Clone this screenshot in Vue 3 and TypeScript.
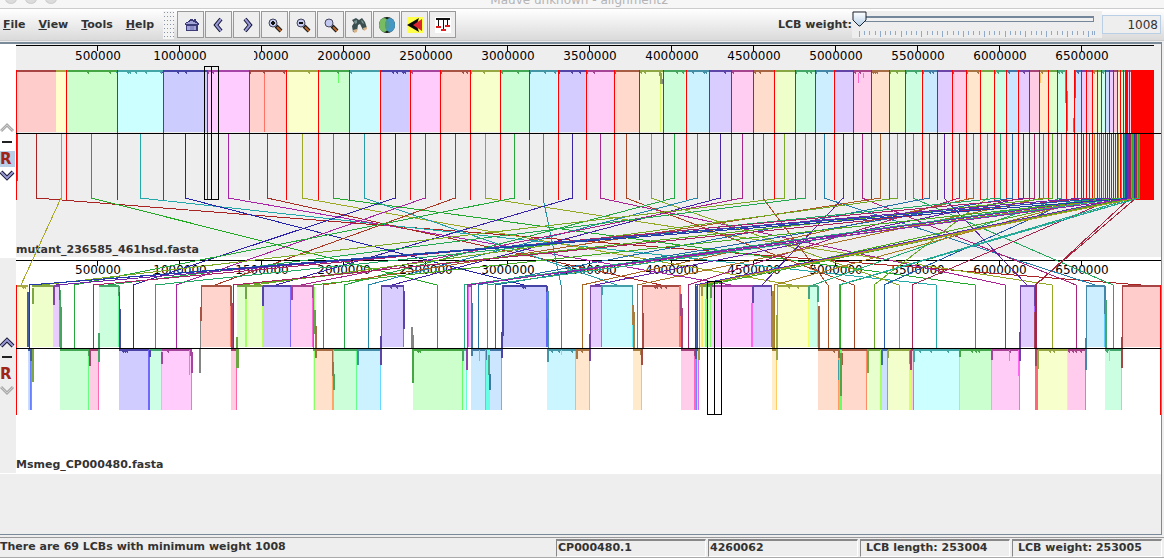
<script setup lang="ts">
import { ref } from 'vue'

type Strand = 'up' | 'down'
interface Lcb { id: number; hue: number; a: number; aEnd: number; b: number; bEnd: number; strand: Strand }
interface Bar { x: number; y: number; w: number; h: number; fill: string }

const weight = ref('1008')
const level = ref(0)

const menus = ['File', 'View', 'Tools', 'Help']
const tools = ['Home', 'Left', 'Right', 'Zoom in', 'Zoom out', 'Zoom reset', 'Find feature', 'Color scheme', 'Reference', 'Show LCB tree']
const rulerSteps = Array.from({ length: 13 }, (_, i) => ({ x: 97 + 82 * i, text: String((i + 1) * 500000) }))
const sliderTicks = [
  ...Array.from({ length: 45 }, (_, i) => ({ x: 7 + Math.round((i * 26) / 5), major: i % 4 === 0 })),
  { x: 240, major: false },
  { x: 242, major: false },
]

/* Start of every block in the first genome, in order. */
const startsA = [
  16, 56, 66, 117, 163, 207, 249, 286, 318, 349, 380, 410, 440, 470, 500, 529, 558, 586, 614, 639, 663, 686, 709, 731,
  753, 774, 795, 815, 834, 853, 871, 889, 905, 922, 937, 952, 966, 980, 994, 1006, 1018, 1029, 1039, 1048, 1057, 1074,
  1081, 1086, 1092, 1097, 1101, 1105, 1109, 1113, 1117, 1120, 1123, 1125, 1127, 1129, 1131, 1132, 1133, 1134, 1135,
  1136, 1137, 1138, 1139, 1140,
]
/* Span in the second genome; a negative start marks the reverse strand. */
const spansB: Record<number, [number, number]> = {
  1: [16, 28], 51: [-28, 32], 63: [-29, 31], 25: [32, 54], 46: [54, 60], 14: [-60, 89], 41: [-89, 99], 26: [99, 119],
  10: [-119, 149], 38: [-149, 162], 11: [-162, 192], 12: [201, 231], 47: [-231, 237], 43: [237, 246], 31: [246, 263],
  16: [263, 291], 23: [291, 313], 55: [-313, 315], 30: [-315, 333], 20: [-333, 357], 21: [-357, 381], 22: [381, 404],
  2: [-413, 463], 50: [-463, 467], 52: [467, 472], 64: [467, 469], 33: [-471, 486], 56: [-486, 490], 54: [-487, 489],
  39: [-490, 502], 4: [502, 547], 15: [-547, 576], 36: [-576, 590], 40: [590, 602], 9: [602, 633], 42: [-633, 642],
  6: [642, 681], 35: [-681, 696], 57: [-695, 697], 58: [-697, 699], 60: [699, 703], 66: [700, 702], 49: [703, 707],
  61: [707, 711], 5: [711, 753], 28: [753, 772], 48: [-772, 777], 7: [777, 809], 44: [809, 818], 24: [-818, 839],
  62: [-839, 840], 68: [-839, 841], 67: [-840, 842], 18: [-842, 867], 37: [-867, 882], 45: [-882, 888], 19: [-888, 911],
  53: [-911, 914], 3: [-914, 960], 8: [-960, 992], 17: [-992, 1020], 34: [1020, 1035], 59: [-1035, 1038],
  65: [-1035, 1037], 13: [-1038, 1068], 29: [-1068, 1086], 27: [1086, 1105], 32: [-1105, 1122], 0: [1122, 1161],
}
const lcbs: Lcb[] = startsA.slice(0, -1).map((a, id) => {
  const [s, e] = spansB[id]
  return {
    id, a, b: Math.abs(s), bEnd: e,
    aEnd: id === 44 ? 1066 : startsA[id + 1],
    hue: (id % 6) * 60 + Math.floor(id / 6) * 5,
    strand: s < 0 ? 'down' : 'up',
  }
})

const pale = (h: number) => `hsl(${h}, 100%, 90%)`
const vivid = (h: number) => `hsl(${h}, 100%, 70%)`
const line = (h: number) => `hsl(${h}, 66%, 40%)`
const shade = (h: number) => (h < 0 ? '#858585' : `hsl(${h}, 42%, 46%)`)
const midA = (l: Lcb) => Math.floor((l.a + l.aEnd) / 2)
const midB = (l: Lcb) => Math.floor((l.b + l.bEnd - 1) / 2)

const redLines = [...startsA.filter((_, i) => i !== 1), 1066]

const blockBars: Bar[] = lcbs.flatMap((l) => {
  const up = l.strand === 'up'
  const w = l.bEnd - l.b
  return [
    { x: l.a, y: 71, w: l.aEnd - l.a, h: 61, fill: pale(l.hue) },
    { x: l.a, y: 70, w: l.aEnd - l.a, h: 2, fill: shade(l.hue) },
    { x: l.b, y: up ? 286 : 350, w, h: up ? 61 : 60, fill: pale(l.hue) },
    { x: l.bEnd - 1, y: up ? 286 : 350, w: 1, h: up ? 61 : 60, fill: vivid(l.hue) },
    { x: l.b, y: up ? 285 : 349, w, h: 2, fill: shade(l.hue) },
  ]
})

const vividBars: Bar[] = ([
  [264, 72, 1, 60, 5], [338, 73, 1, 10, 120], [660, 84, 1, 48, 75], [858, 73, 1, 10, 320], [863, 73, 1, 5, 320],
  [1040, 73, 1, 10, 35], [148, 350, 2, 60, 245], [189, 350, 1, 25, 305], [245, 299, 2, 48, 95], [313, 287, 2, 42, 105],
  [332, 350, 2, 60, 25], [485, 350, 1, 49, 205], [486, 350, 4, 60, 170], [479, 350, 1, 11, 205], [561, 350, 1, 5, 190],
  [546, 318, 2, 29, 240], [679, 286, 2, 61, 5], [694, 350, 2, 60, 325], [705, 299, 2, 48, 110], [710, 298, 1, 49, 110],
  [751, 303, 2, 44, 305], [839, 350, 3, 60, 120], [880, 350, 2, 60, 95], [887, 350, 1, 57, 215], [909, 350, 2, 60, 75],
  [1009, 350, 1, 11, 305], [1018, 350, 1, 26, 305], [1035, 350, 3, 60, 352], [1109, 350, 1, 11, 145],
] as number[][]).map(([x, y, w, h, hue]) => ({ x, y, w, h, fill: vivid(hue) }))

const drops: Bar[] = ([
  [659, 71, 2, 5, 75], [660, 73, 2, 11, 75], [662, 79, 1, 5, -1], [1065, 72, 1, 31, 155], [1067, 91, 1, 40, -1],
  [1073, 118, 1, 14, -1], [1075, 72, 1, 26, 215],
  [27, 292, 2, 55, 225], [30, 349, 2, 12, 225], [32, 288, 2, 16, 85], [32, 348, 2, 34, 85], [53, 286, 2, 19, 275],
  [59, 286, 1, 14, 275], [60, 290, 1, 58, 135], [61, 307, 1, 41, 135], [88, 349, 1, 7, 130], [89, 350, 2, 16, 330],
  [98, 333, 2, 29, 140], [118, 286, 2, 10, 140], [119, 292, 1, 56, 245], [120, 309, 1, 39, 245], [149, 350, 2, 7, 245],
  [161, 352, 2, 12, 305], [190, 350, 2, 6, 305], [191, 352, 2, 21, 305], [200, 321, 1, 28, -1], [199, 348, 2, 25, -1],
  [200, 307, 2, 14, 10], [201, 286, 1, 30, 10], [230, 286, 2, 20, 10], [231, 303, 2, 45, 335], [236, 337, 2, 12, 95],
  [236, 348, 3, 20, 95], [245, 286, 2, 13, 95], [262, 286, 2, 20, 250], [291, 286, 2, 14, 315], [312, 286, 1, 12, 315],
  [314, 310, 2, 24, 105], [315, 326, 2, 32, 25], [332, 350, 1, 16, 25], [332, 362, 2, 14, 25], [333, 374, 2, 16, 135],
  [357, 350, 2, 15, 195], [380, 336, 2, 29, 255], [381, 286, 1, 50, 255], [403, 286, 1, 14, 255], [403, 291, 2, 38, 255],
  [411, 327, 2, 22, -1], [412, 335, 2, 35, -1], [412, 349, 2, 34, 120], [462, 350, 2, 11, 135], [466, 348, 2, 22, 285],
  [467, 286, 1, 62, 285], [471, 286, 1, 18, 285], [471, 303, 2, 45, 205], [471, 350, 2, 6, 205], [486, 350, 1, 10, 205],
  [488, 355, 2, 20, 165], [489, 374, 2, 16, 210], [501, 332, 2, 26, 245], [502, 286, 2, 50, 245], [546, 286, 2, 6, 240],
  [547, 291, 2, 27, 190], [548, 302, 1, 60, 190], [547, 349, 2, 13, 190], [576, 350, 2, 9, 30], [589, 334, 2, 27, 270],
  [590, 286, 1, 48, 270], [601, 286, 2, 9, 185], [632, 286, 1, 20, 185], [632, 305, 2, 20, 35], [633, 312, 2, 36, 35],
  [640, 350, 2, 5, 35], [641, 349, 2, 16, 5], [642, 286, 1, 62, 5], [642, 313, 2, 35, 5], [680, 294, 2, 22, 325],
  [681, 308, 2, 40, 325], [694, 350, 2, 6, 325], [695, 334, 2, 25, 225], [696, 286, 1, 62, 225], [698, 349, 2, 11, 50],
  [699, 286, 1, 62, 50], [701, 287, 2, 9, 50], [706, 286, 2, 13, 100], [710, 286, 2, 12, 110], [752, 286, 2, 17, 260],
  [771, 286, 1, 10, 260], [772, 291, 2, 57, 40], [776, 315, 2, 45, 65], [777, 286, 1, 62, 65], [808, 286, 2, 13, 155],
  [817, 286, 2, 16, 155], [818, 306, 2, 42, 20], [838, 350, 2, 8, 20], [838, 360, 1, 20, 185], [840, 353, 2, 43, 115],
  [842, 353, 1, 12, 15], [867, 350, 2, 23, 90], [881, 350, 2, 15, 215], [888, 350, 1, 8, 75], [909, 350, 1, 14, 75],
  [910, 350, 2, 20, 340], [913, 350, 2, 12, 180], [959, 350, 2, 7, 120], [991, 350, 2, 10, 305], [1019, 332, 2, 29, 265],
  [1020, 286, 1, 46, 265], [1034, 286, 1, 20, 265], [1035, 298, 1, 16, 265], [1034, 312, 2, 36, 345],
  [1035, 349, 2, 17, 345], [1037, 350, 2, 19, 70], [1085, 338, 2, 32, 200], [1086, 286, 1, 52, 200],
  [1104, 286, 2, 28, 200], [1105, 300, 2, 50, 145], [1121, 337, 2, 31, 0], [1122, 286, 1, 51, 0],
] as number[][]).map(([x, y, w, h, hue]) => ({ x, y, w, h, fill: shade(hue) }))

/* Small dips just beneath the similarity cap. */
const dipsA = [
  88, 110, 117, 128, 130, 136, 146, 161, 163, 178, 186, 208, 213, 250, 264, 284, 309, 338, 351, 393, 397, 403, 405, 412,
  441, 463, 467, 471, 484, 502, 518, 530, 545, 555, 559, 572, 580, 587, 594, 615, 641, 645, 677, 683, 693, 704, 706,
  725, 733, 755, 760, 796, 807, 811, 816, 827, 855, 860, 873, 875, 877, 890, 897, 906, 916, 923, 930, 933, 953, 967,
  978, 995, 998, 1009, 1024, 1042, 1059, 1062, 1078, 1094, 1103,
]
const dipsUp = [23, 25, 391, 397, 523, 525, 655, 657, 661, 666, 789, 798]
const dipsDown = [
  123, 125, 127, 168, 418, 420, 552, 559, 572, 582, 834, 920, 931, 948, 972, 976, 979, 1010, 1050, 1054, 1069, 1073,
  1076, 1081, 1107,
]
const dip = (x: number, y: number, l?: Lcb): Bar => ({ x: x - 1, y, w: 2, h: 1, fill: shade(l ? l.hue : 0) })
const dipPair = (x: number, y: number, l?: Lcb): Bar[] => [dip(x, y, l), { ...dip(x, y + 1, l), x, w: 1 }]
const dips: Bar[] = [
  ...dipsA.flatMap((x) => dipPair(x, 72, lcbs.find((l) => x >= l.a && x < l.aEnd))),
  ...dipsUp.flatMap((x) => dipPair(x, 287, lcbs.find((l) => l.strand === 'up' && x >= l.b && x < l.bEnd))),
  ...dipsDown.flatMap((x) => dipPair(x, 351, lcbs.find((l) => l.strand === 'down' && x >= l.b && x < l.bEnd))),
]

const bars: Bar[] = [...blockBars, ...vividBars, ...drops, ...dips]

const stems: Bar[] = lcbs.flatMap((l) => {
  const out = [{ x: midA(l), y: 134, w: 1, h: l.id === 1 ? 66 : 65, fill: line(l.hue) }]
  if (l.strand === 'down') out.push({ x: midB(l), y: 285, w: 1, h: 63, fill: line(l.hue) })
  return out
})
</script>

<template>
  <div class="window">
    <header class="titlebar">
      <i class="dot"></i><i class="dot"></i><i class="dot"></i>
      <span class="title">Mauve unknown - alignment2</span>
    </header>

    <div class="toolbar">
      <nav class="menus">
        <button v-for="m in menus" :key="m" class="menu"><u>{{ m[0] }}</u>{{ m.slice(1) }}</button>
      </nav>
      <div class="grip"></div>
      <div class="tools">
        <button v-for="(t, i) in tools" :key="t" class="tool" :aria-label="t">
          <svg viewBox="0 0 20 20" width="20" height="20">
            <g v-if="i === 0" shape-rendering="crispEdges">
              <path d="M4 8h1v-1h2v-1h1v-1h1v-1h3v1h1v-1h2v2h1v1h1v1h1v2h-1v6h-12v-6h-1v-2z" fill="#3c3c78" />
              <path d="M5 8h2v-1h2v-1h3v1h2v1h2v1h-11zM6 11h9v4h-9z" fill="#a3a3d8" />
              <path d="M9 11h4v4h-4z" fill="#8c8cc4" />
            </g>
            <g v-else-if="i === 1 || i === 2" fill="none">
              <path :d="i === 1 ? 'M12 4L7 10L12 16' : 'M8 4L13 10L8 16'" stroke="#101030" stroke-width="4" />
              <path :d="i === 1 ? 'M12 4L7 10L12 16' : 'M8 4L13 10L8 16'" stroke="#9999d6" stroke-width="2" />
            </g>
            <g v-else-if="i < 6">
              <path d="M11 11L16 16" stroke="#1a1a1a" stroke-width="4" />
              <path d="M12 12L16 16" stroke="#b8662a" stroke-width="2" />
              <circle cx="8" cy="8" r="4" fill="#c3c8ee" stroke="#44445c" />
              <path v-if="i < 5" d="M6 8h4" stroke="#111" stroke-width="2" />
              <path v-if="i === 3" d="M8 6v4" stroke="#111" stroke-width="2" />
            </g>
            <g v-else-if="i === 6">
              <path d="M3 5L7 3L10 5L13 3L16 7L18 13L14 15L11 9L9 10L8 16L4 17L3 11L5 8Z" fill="#3b4f50" />
              <path d="M5 6L8 5L8 8L6 9ZM12 5L14 6L15 9L13 8Z" fill="#7b9294" />
              <path d="M4 15L8 14L8 17L5 18ZM14 13L18 12L18 14L15 16Z" fill="#d8b48c" />
            </g>
            <g v-else-if="i === 7">
              <circle cx="10" cy="10" r="8" fill="#0c1a0c" />
              <ellipse cx="7" cy="10" rx="5" ry="7" fill="#78bb62" />
              <ellipse cx="13" cy="10" rx="5" ry="7" fill="#4797c4" />
              <path d="M10 4Q12 7 12 10Q12 13 10 16Q8 13 8 10Q8 7 10 4Z" fill="#4c9b91" />
            </g>
            <g v-else-if="i === 8">
              <rect x="2" y="2" width="16" height="16" fill="#ffff4a" />
              <path d="M2 10L14 3L12 9L12 11L14 17Z" fill="#0a0a0a" />
              <path d="M8 10L17 4V16Z" fill="#dc2430" />
            </g>
            <g v-else shape-rendering="crispEdges">
              <rect x="2" y="2" width="16" height="16" fill="#fff" />
              <path d="M3 3h14v2h-2v6h-1v-6h-3v9h-1v-9h-4v7h-1v-7h-2z" fill="#111" />
              <path d="M3 11h5v2h-5zM8 14h5v2h-5zM12 10h5v2h-5z" fill="#dd2020" />
            </g>
          </svg>
        </button>
      </div>
      <label class="weight-label" for="weight-slider">LCB weight:</label>
      <div class="slider">
        <svg viewBox="0 0 250 27" width="250" height="27" aria-hidden="true">
          <defs>
            <linearGradient id="knob" x1="0" y1="0" x2="0" y2="1">
              <stop offset="0" stop-color="#ffffff" />
              <stop offset="1" stop-color="#b4cfe8" />
            </linearGradient>
          </defs>
          <g shape-rendering="crispEdges">
            <rect x="7" y="5" width="235" height="6" fill="#74879a" />
            <rect x="7" y="7" width="234" height="3" fill="#f0f0f0" />
            <rect v-for="t in sliderTicks" :key="t.x" :x="t.x" y="20" width="1" :height="t.major ? 6 : 4" fill="#8fabc9" />
          </g>
          <path d="M1 1H14V9L8 15L7 15L1 9Z" fill="url(#knob)" stroke="#1c2430" />
        </svg>
        <input id="weight-slider" v-model="level" type="range" min="0" max="100" />
      </div>
      <input v-model="weight" class="weight-value" type="text" aria-label="Minimum LCB weight" />
    </div>

    <main class="viewer">
      <aside class="side">
        <section class="controls first">
          <button class="mini" aria-label="Move first genome up" disabled>
            <svg viewBox="0 0 16 12" width="16" height="12"><path d="M1 9L7 3L13 9" fill="none" stroke="#aaa" stroke-width="3" /><path d="M1 9L7 3L13 9" fill="none" stroke="#ccc" /></svg>
          </button>
          <button class="mini dash" aria-label="Hide first genome"><i></i></button>
          <button class="mini letter on" aria-label="Reference genome">R</button>
          <button class="mini" aria-label="Move first genome down">
            <svg viewBox="0 0 16 12" width="16" height="12"><path d="M1 3L7 9L13 3" fill="none" stroke="#151530" stroke-width="4" /><path d="M1 3L7 9L13 3" fill="none" stroke="#9999d6" stroke-width="2" /></svg>
          </button>
        </section>
        <section class="controls second">
          <button class="mini" aria-label="Move second genome up">
            <svg viewBox="0 0 16 12" width="16" height="12"><path d="M1 9L7 3L13 9" fill="none" stroke="#151530" stroke-width="4" /><path d="M1 9L7 3L13 9" fill="none" stroke="#9999d6" stroke-width="2" /></svg>
          </button>
          <button class="mini dash" aria-label="Hide second genome"><i></i></button>
          <button class="mini letter" aria-label="Set as reference genome">R</button>
          <button class="mini" aria-label="Move second genome down" disabled>
            <svg viewBox="0 0 16 12" width="16" height="12"><path d="M1 3L7 9L13 3" fill="none" stroke="#aaa" stroke-width="3" /><path d="M1 3L7 9L13 3" fill="none" stroke="#ccc" /></svg>
          </button>
        </section>
      </aside>

      <svg class="genomes" viewBox="16 44 1145 430" shape-rendering="crispEdges">
        <defs>
          <clipPath id="ruler-clip"><path d="M16 44H233V64H16ZM254 44H1161V64H254Z" /></clipPath>
        </defs>
        <rect x="16" y="44" width="1145" height="213" fill="#eeeeee" />
        <rect x="16" y="257" width="1145" height="217" fill="#ffffff" />

        <g class="ruler" clip-path="url(#ruler-clip)">
          <rect x="16" y="45" width="1138" height="1" />
          <g v-for="s in rulerSteps" :key="s.text">
            <rect :x="s.x" y="46" width="1" height="5" />
            <text :x="s.x + 1" y="60">{{ s.text }}</text>
          </g>
        </g>
        <rect x="233" y="45" width="21" height="1" />
        <g class="ruler">
          <rect x="16" y="260" width="1145" height="1" />
          <g v-for="s in rulerSteps" :key="s.text">
            <rect :x="s.x" y="261" width="1" height="5" />
            <text :x="s.x + 1" y="274">{{ s.text }}</text>
          </g>
        </g>

        <rect v-for="(b, i) in bars" :key="i" :x="b.x" :y="b.y" :width="b.w" :height="b.h" :fill="b.fill" />

        <g fill="#ff0000">
          <rect v-for="x in redLines" :key="x" :x="x" y="70" width="1" height="130" />
          <rect x="1126" y="70" width="1" height="130" />
          <rect x="1131" y="70" width="23" height="130" />
          <rect x="16" y="285" width="1" height="130" />
          <rect x="1160" y="285" width="1" height="130" />
        </g>
        <rect x="17" y="134" width="1" height="47" fill="#c04040" />

        <rect v-for="(s, i) in stems" :key="'s' + i" :x="s.x" :y="s.y" :width="s.w" :height="s.h" :fill="s.fill" />
        <rect x="16" y="133" width="1145" height="1" />
        <rect x="16" y="348" width="1145" height="1" />

        <text class="name" x="16" y="253">mutant_236585_461hsd.fasta</text>
        <text class="name" x="16" y="468">Msmeg_CP000480.fasta</text>

        <path v-for="l in lcbs" :key="'l' + l.id" :d="`M${midA(l)} 198L${midB(l)} 285`" :stroke="line(l.hue)" fill="none" />

        <g fill="none" stroke="#000">
          <path d="M204 66H218V199H204ZM211 66V199M707 281H721V414H707ZM714 281V414" />
        </g>
      </svg>
    </main>

    <div class="filler"></div>

    <footer class="status">
      <span class="message">There are 69 LCBs with minimum weight 1008</span>
      <span class="field">CP000480.1</span>
      <span class="field">4260062</span>
      <span class="field inset">LCB length: 253004</span>
      <span class="field inset">LCB weight: 253005</span>
    </footer>
  </div>
</template>

<style>
html,
body {
  margin: 0;
  background: #eeeeee;
}
</style>

<style scoped>
.window {
  display: flex;
  flex-direction: column;
  min-height: 100vh;
  box-sizing: border-box;
  background: #eeeeee;
  color: #333333;
  font: bold 11px/16px "DejaVu Sans", sans-serif;
}
button,
input {
  font: inherit;
  color: inherit;
  margin: 0;
  padding: 0;
  border: 0;
  background: none;
}
.titlebar {
  display: flex;
  align-items: flex-end;
  gap: 8px;
  height: 8px;
  padding-left: 5px;
  overflow: hidden;
  background: #f6f6f6;
  border-bottom: 1px solid #cccccc;
}
.dot {
  flex: none;
  width: 12px;
  height: 12px;
  margin-bottom: 4px;
  border-radius: 50%;
  background: #dcdcdc;
  box-shadow: inset 0 0 0 1px #d0d0d0;
}
.title {
  flex: 1;
  padding-right: 70px;
  text-align: center;
  font-weight: normal;
  font-size: 12px;
  color: #b4b4b4;
}
.toolbar {
  display: flex;
  align-items: center;
  height: 31px;
  padding-right: 3px;
  background: linear-gradient(#ffffff, #dadada);
  border-bottom: 1px solid #cccccc;
}
.menus {
  display: flex;
  gap: 13px;
  width: 160px;
  padding-left: 3px;
}
.grip {
  flex: none;
  width: 11px;
  height: 28px;
  margin-right: 3px;
  background:
    linear-gradient(90deg, #f4f4f4 1px, transparent 1px 2px, #f4f4f4 2px) 0 0 / 3px 4px,
    linear-gradient(#f4f4f4 1px, #8a96a4 1px 2px, #f4f4f4 2px) 0 0 / 4px 4px;
}
.tools {
  display: flex;
  gap: 1px;
}
.tool {
  display: grid;
  place-items: center;
  width: 27px;
  height: 27px;
  box-sizing: border-box;
  background: #eeeeee;
  border: 1px solid #999999;
}
.weight-label {
  margin-left: auto;
}
.slider {
  display: grid;
  width: 250px;
  height: 27px;
  background: #eeeeee;
}
.slider > * {
  grid-area: 1 / 1;
}
.slider input {
  width: 250px;
  height: 27px;
  opacity: 0;
}
.weight-value {
  width: 59px;
  height: 19px;
  box-sizing: border-box;
  padding: 0 2px;
  border: 1px solid #b8cfe5;
  background: #eeeeee;
  text-align: right;
  font-size: 12px;
  font-weight: normal;
}
.viewer {
  display: grid;
  grid-template-columns: 16px 1fr;
  margin-top: 1px;
  border-top: 2px solid #7a8a99;
  border-right: 1px solid #7a8a99;
  margin-right: 2px;
}
.side {
  display: grid;
  grid-template-rows: 1fr 1fr;
}
.controls {
  display: flex;
  flex-direction: column;
  align-items: stretch;
  justify-content: center;
  gap: 2px;
}
.first {
  background: #ffffff;
  border-bottom: 1px solid #eeeeee;
}
.second {
  border-bottom: 1px solid #ffffff;
}
.mini {
  display: block;
  width: 16px;
  line-height: 0;
}
.dash {
  height: 13px;
}
.dash i {
  display: block;
  width: 10px;
  height: 2px;
  margin-left: 2px;
  background: #222222;
}
.letter {
  width: 15px;
  height: 16px;
  font-size: 15px;
  line-height: 16px;
  text-align: left;
  color: #a02418;
}
.on {
  background: #b8cfe5;
}
.genomes {
  display: block;
  width: 100%;
  height: auto;
}
.ruler text {
  font: 12px "DejaVu Sans", sans-serif;
  text-anchor: middle;
}
.name {
  font: bold 11px "DejaVu Sans", sans-serif;
  fill: #333333;
}
.filler {
  flex: 1;
  margin-right: 2px;
  border-right: 1px solid #7a8a99;
  border-bottom: 1px solid #7a8a99;
}
.status {
  display: flex;
  gap: 2px;
  margin-top: 2px;
  padding: 1px 2px 0 0;
  border-top: 1px solid #999999;
  border-bottom: 1px solid #aaaaaa;
}
.message {
  flex: 1;
  line-height: 16px;
}
.field {
  width: 150px;
  height: 18px;
  line-height: 14px;
  box-sizing: border-box;
  padding-left: 1px;
  border: 1px solid #ffffff;
  border-top: 2px solid #888888;
  border-left-color: #888888;
}
.inset {
  padding-left: 5px;
}
</style>
